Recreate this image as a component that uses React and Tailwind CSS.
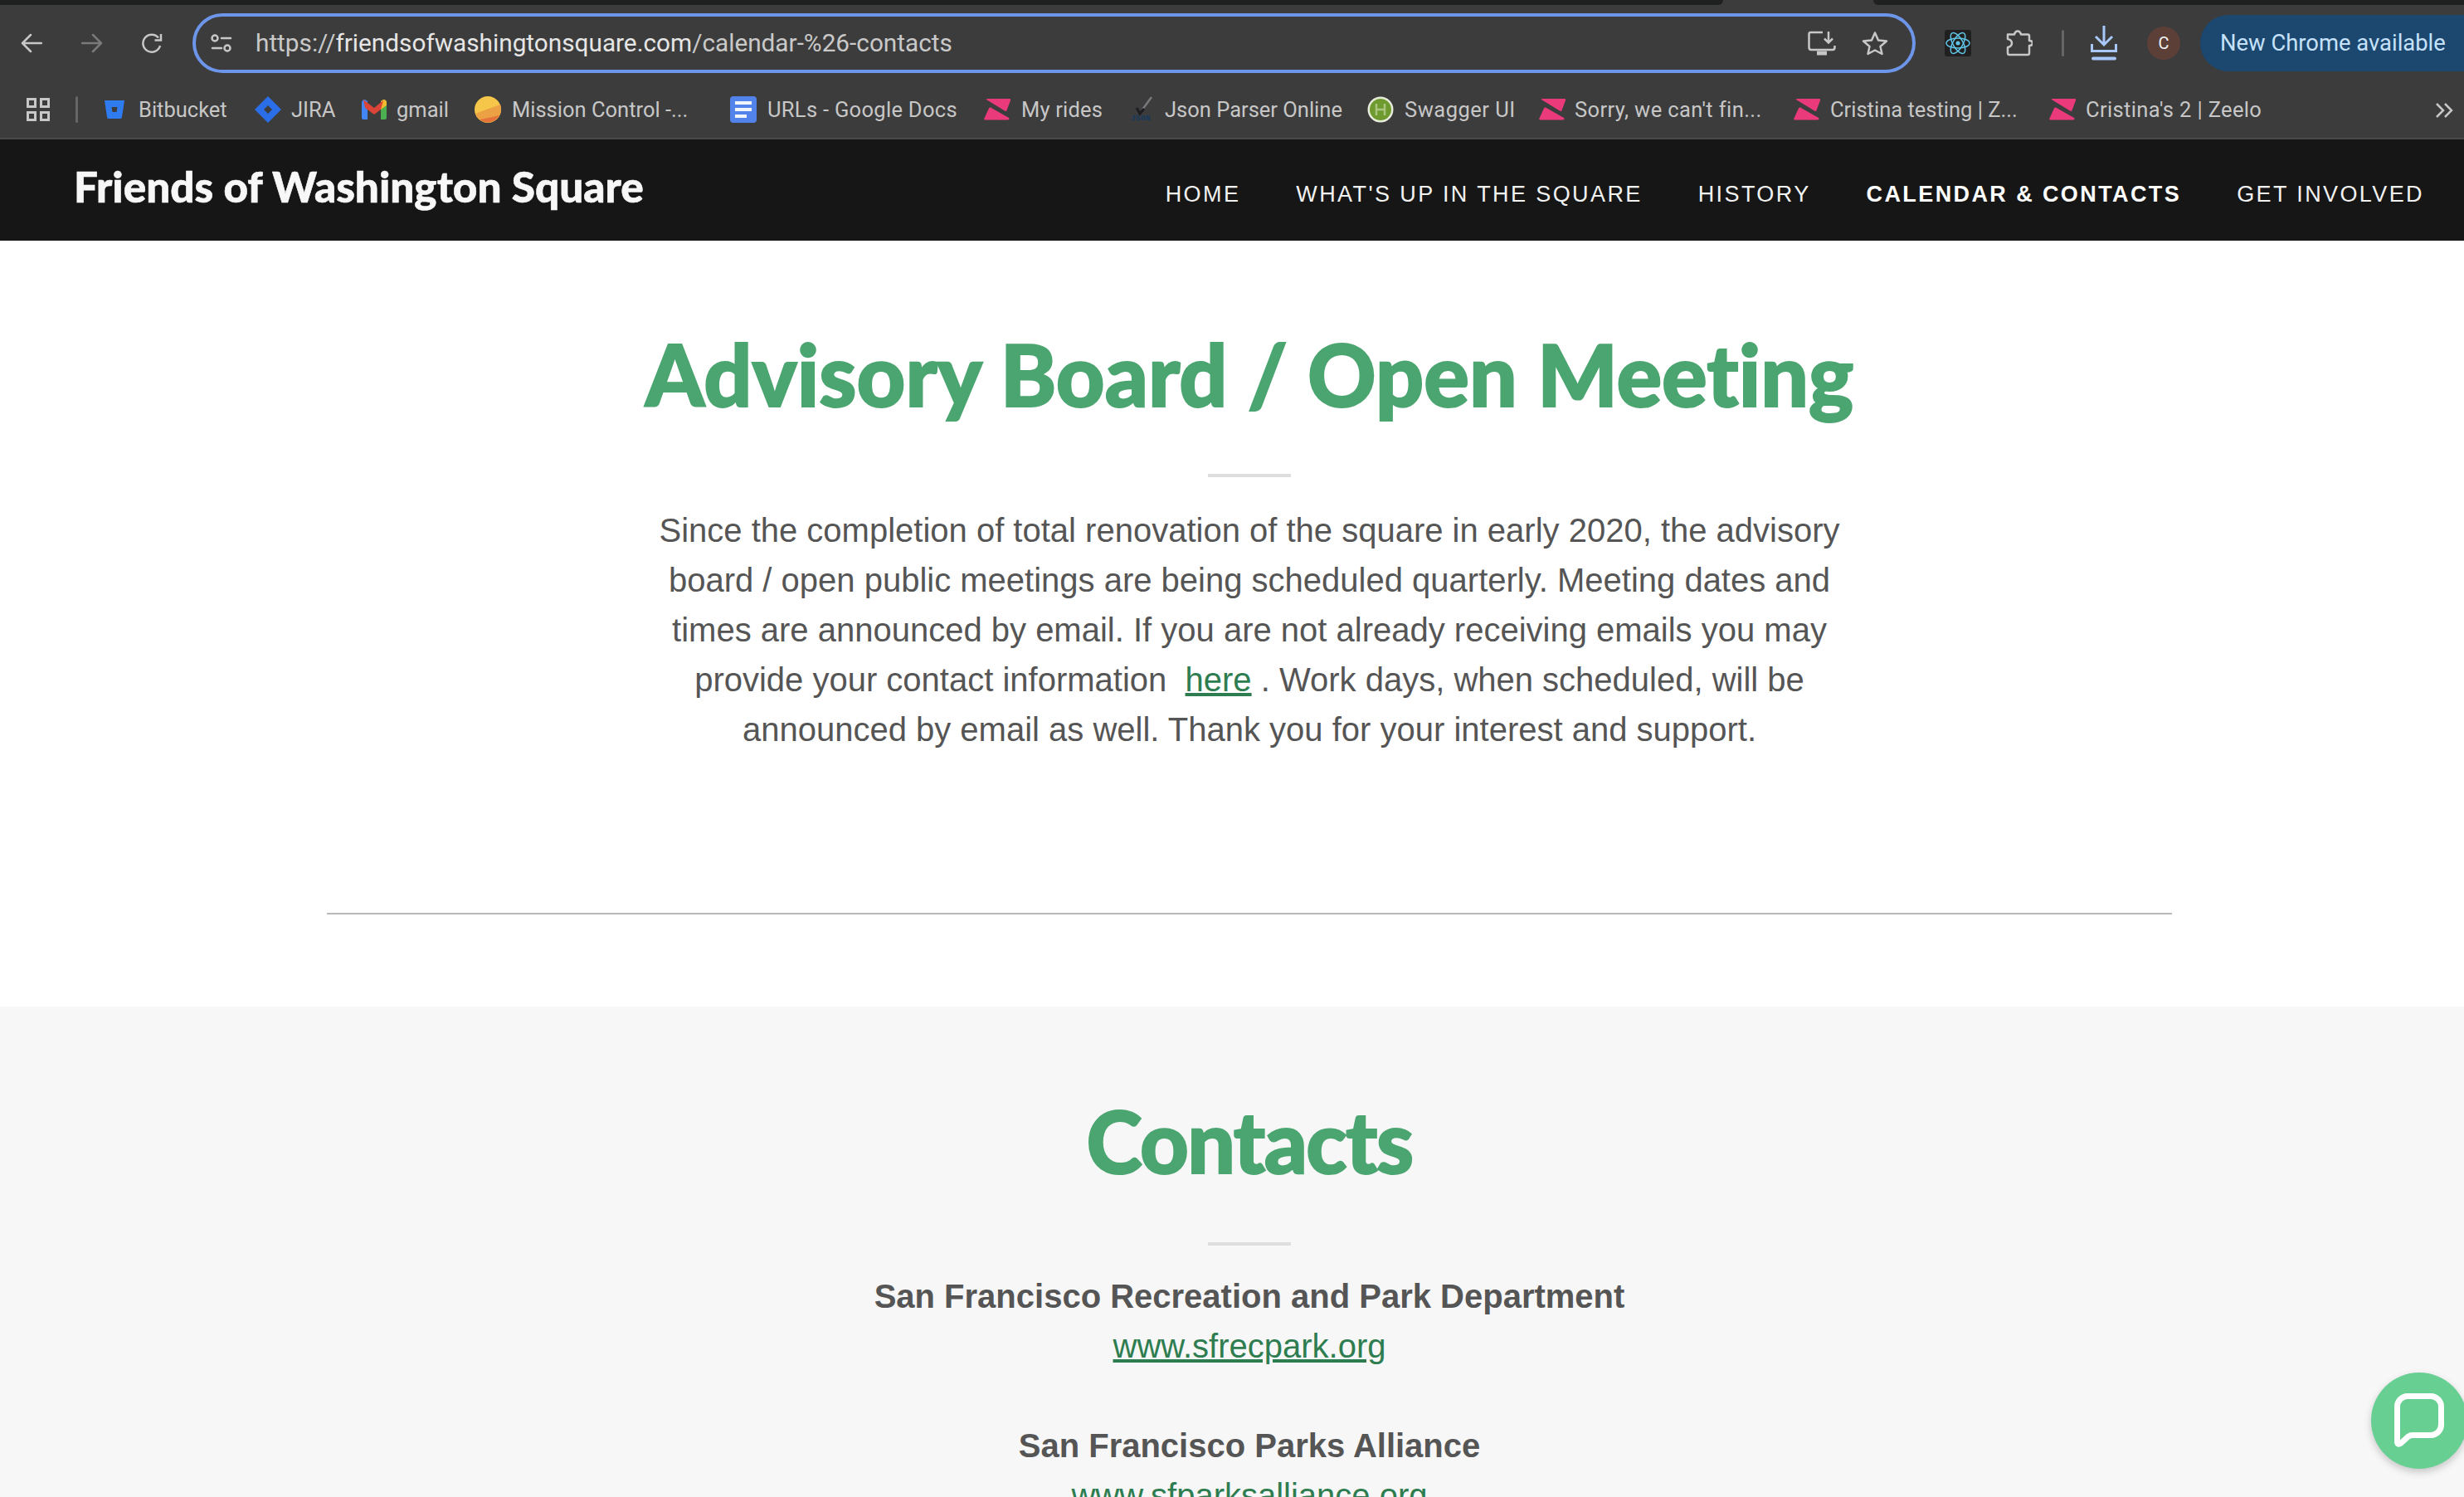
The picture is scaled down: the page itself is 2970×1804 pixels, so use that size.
import React from "react";

const Zeelo = () => (
  <svg width="32" height="26" viewBox="0 0 32 26">
    <path d="M3 1 Q2 0 4 0 H31 Q33 0 32 2 L27.500 14 Q27 15.500 25 14.500 Z" fill="#ea3a7c" />
    <path d="M8 10.500 L30 23 Q31.500 25 29 25.500 H1.500 Q-0.500 25.500 0.500 23.500 L6 11.500 Q7 10 8 10.500 Z" fill="#ea3a7c" />
  </svg>
);

const BitbucketIcon = () => (
  <svg width="24" height="22" viewBox="0 0 24 22">
    <path fillRule="evenodd" d="M0 0 H24 L21 20 Q21 22 19 22 H5 Q3 22 3 20 Z M8.500 8 L9.500 14 H14.500 L15.500 8 Z" fill="#2f7bf0" />
  </svg>
);

const JiraIcon = () => (
  <svg width="32" height="32" viewBox="0 0 32 32">
    <path fillRule="evenodd" d="M16 0 L32 16 L16 32 L0 16 Z M16 11 L11 16 L16 21 L21 16 Z" fill="#2a6fe8" />
  </svg>
);

const GmailIcon = () => (
  <svg width="30" height="24" viewBox="0 0 30 24">
    <path d="M0 4 Q0 0 4 0 L7 2 V24 H2 Q0 24 0 22 Z" fill="#4285f4" />
    <path d="M23 2 L26 0 Q30 0 30 4 V22 Q30 24 28 24 H23 Z" fill="#4caf50" />
    <path d="M23 2 L26 0 Q30 0 30 4 V7 L23 12 Z" fill="#f4b92e" />
    <path d="M2 0 L15 10 L26 1 L23 12 L15 18 L4 10 Z" fill="#db4437" />
  </svg>
);

const MissionIcon = () => (
  <svg width="32" height="32" viewBox="0 0 32 32">
    <circle cx="16" cy="16" r="16" fill="#f6c64a" />
    <path d="M1 21 Q14 16 31 10 Q32 13 32 16 A16 16 0 0 1 1 21 Z" fill="#eba144" />
    <path d="M6 28 Q18 26 30 23 A16 16 0 0 1 6 28 Z" fill="#e5743a" />
  </svg>
);

const DocsIcon = () => (
  <svg width="32" height="32" viewBox="0 0 32 32">
    <rect width="32" height="32" rx="4" fill="#5283ea" />
    <rect x="6" y="6" width="20" height="4" fill="#f1f4fb" />
    <rect x="6" y="14" width="20" height="4" fill="#f1f4fb" />
    <rect x="6" y="22" width="14" height="4" fill="#f1f4fb" />
  </svg>
);

const JsonIcon = () => (
  <svg width="32" height="32" viewBox="0 0 32 32">
    <path d="M29 1 L18 16" stroke="#77797c" strokeWidth="2.500" fill="none" />
    <path d="M11 14 L15 21 L20 15" stroke="#1d1d22" strokeWidth="3" fill="none" />
    <text x="16" y="29" textAnchor="middle" fontSize="9" fontWeight="700" letterSpacing="0.500" fill="#123a63" fontFamily="'Liberation Mono', monospace">JSON</text>
  </svg>
);

const SwaggerIcon = () => (
  <svg width="32" height="32" viewBox="0 0 32 32">
    <circle cx="16" cy="16" r="15.500" fill="#e6ecd9" />
    <circle cx="16" cy="16" r="13" fill="#6f9a30" />
    <path d="M11 9 V23 M21 9 V23 M10 16 H22" stroke="#a9c77c" strokeWidth="2.500" fill="none" />
  </svg>
);

const bookmarks = [
  { label: "Bitbucket", icon: <BitbucketIcon />, box: "w-[24px] ml-[32px]", text: "w-[106px] ml-[17px]" },
  { label: "JIRA", icon: <JiraIcon />, box: "w-[32px] ml-[34px]", text: "w-[49px] ml-[12px]" },
  { label: "gmail", icon: <GmailIcon />, box: "w-[30px] ml-[36px]", text: "w-[60px] ml-[12px]" },
  { label: "Mission Control -...", icon: <MissionIcon />, box: "w-[32px] ml-[34px]", text: "w-[211px] ml-[13px]" },
  { label: "URLs - Google Docs", icon: <DocsIcon />, box: "w-[32px] ml-[52px]", text: "w-[228px] ml-[13px] tracking-[0.300px]" },
  { label: "My rides", icon: <Zeelo />, box: "w-[32px] ml-[33px]", text: "w-[96px] ml-[13px] tracking-[0.200px]" },
  { label: "Json Parser Online", icon: <JsonIcon />, box: "w-[32px] ml-[32px]", text: "w-[211px] ml-[13px]" },
  { label: "Swagger UI", icon: <SwaggerIcon />, box: "w-[32px] ml-[33px]", text: "w-[128px] ml-[13px] tracking-[0.500px]" },
  { label: "Sorry, we can't fin...", icon: <Zeelo />, box: "w-[32px] ml-[34px]", text: "w-[224px] ml-[11px] tracking-[0.400px]" },
  { label: "Cristina testing | Z...", icon: <Zeelo />, box: "w-[32px] ml-[40px]", text: "w-[225px] ml-[12px]" },
  { label: "Cristina's 2 | Zeelo", icon: <Zeelo />, box: "w-[32px] ml-[39px]", text: "w-[210px] ml-[12px] tracking-[0.350px]" },
];

const navLinks = [
  { label: "HOME" },
  { label: "WHAT'S UP IN THE SQUARE" },
  { label: "HISTORY" },
  { label: "CALENDAR & CONTACTS", active: true },
  { label: "GET INVOLVED" },
];

const Browser = () => (
  <div className="h-[168px] bg-[#3c3c3c] [font-family:Roboto,sans-serif] border-b-2 border-[#4a4a4a]">
    {/* tab strip */}
    <div className="flex h-[6px] bg-[#3c3c3c]">
      <div className="w-[2077px] bg-[#1f2120] rounded-br-[6px]" />
      <div className="w-[181px]" />
      <div className="flex-1 bg-[#1f2120] rounded-bl-[6px]" />
    </div>

    {/* toolbar */}
    <div className="flex items-center h-[92px] pl-[25px]">
      <svg width="26" height="24" viewBox="0 0 26 24" fill="none" stroke="#c7c7c7" strokeWidth="2.500" strokeLinecap="round" strokeLinejoin="round">
        <path d="M25 12 H2 M12 2 L2 12 L12 22" />
      </svg>
      <svg className="ml-[47px]" width="26" height="24" viewBox="0 0 26 24" fill="none" stroke="#7a7a7a" strokeWidth="2.500" strokeLinecap="round" strokeLinejoin="round">
        <path d="M1 12 H24 M14 2 L24 12 L14 22" />
      </svg>
      <svg className="ml-[46px]" width="26" height="26" viewBox="0 0 26 26" fill="none" stroke="#c7c7c7" strokeWidth="2.500">
        <path d="M23 16 A10.500 10.500 0 1 1 21 6.500" />
        <path d="M24 2 V9.500 H16.500" strokeLinejoin="miter" />
      </svg>

      {/* address bar */}
      <div className="ml-[36px] flex items-center w-[2077px] h-[72px] rounded-full border-4 border-[#6d96ea] pl-[18px] pr-[29px]">
        <svg width="26" height="22" viewBox="0 0 26 22" fill="none" stroke="#c7c7c7" strokeWidth="2.500" strokeLinecap="round">
          <circle cx="5" cy="5" r="3.500" />
          <path d="M13 5 H24 M2 17 H13" />
          <circle cx="20" cy="17" r="3.500" />
        </svg>
        <span className="ml-[28px] text-[29.750px] leading-none text-[#c9c9c9]">
          https://<span className="text-[#e6e6e6]">friendsofwashingtonsquare.com</span>/calendar-%26-contacts
        </span>
        <svg className="ml-auto" width="34" height="30" viewBox="0 0 34 30" fill="none" stroke="#c7c7c7" strokeWidth="2.500">
          <path d="M18 2 H3.500 Q1.500 2 1.500 4 V20 Q1.500 23 4 23 H30 Q32.500 23 32.500 20 V18" />
          <path d="M25 1 V14 M20 9.500 L25 14.500 L30 9.500" />
          <path d="M11 27 H23" strokeWidth="5" />
        </svg>
        <svg className="ml-[31px]" width="32" height="30" viewBox="0 0 32 30" fill="none" stroke="#c7c7c7" strokeWidth="2.500" strokeLinejoin="round">
          <path d="M16 2.500 L20 11.500 L30 12.500 L22.500 19 L24.500 28 L16 23.500 L7.500 28 L9.500 19 L2 12.500 L12 11.500 Z" />
        </svg>
      </div>

      {/* extensions */}
      <div className="ml-[35px] flex items-center justify-center w-[32px] h-[32px] rounded-[3px] bg-[#202020]">
        <svg width="30" height="30" viewBox="0 0 30 30" fill="none" stroke="#61c3e6" strokeWidth="1.500">
          <ellipse cx="15" cy="15" rx="14" ry="6" />
          <ellipse cx="15" cy="15" rx="14" ry="6" transform="rotate(60 15 15)" />
          <ellipse cx="15" cy="15" rx="14" ry="6" transform="rotate(120 15 15)" />
          <circle cx="15" cy="15" r="2.500" fill="#61c3e6" stroke="none" />
        </svg>
      </div>
      <svg className="ml-[42px]" width="32" height="32" viewBox="0 0 32 32" fill="none" stroke="#c7c7c7" strokeWidth="2.500" strokeLinejoin="round">
        <path d="M2 5.500 H10 Q11 1.500 14 1.500 Q17 1.500 18 5.500 H26 Q28 5.500 28 7.500 V13 Q32 13 32 16 Q32 19 28 19 V28 Q28 30 26 30 H4 Q2 30 2 28 V21 Q7 20 7 16 Q7 12 2 11 Z" />
      </svg>
      <div className="ml-[35px] w-[3px] h-[32px] rounded-full bg-[#666666]" />
      <svg className="ml-[32px]" width="32" height="42" viewBox="0 0 32 42" fill="none" stroke="#a8c7fa" strokeWidth="3">
        <path d="M16 0 V22 M6 13 L16 23 L26 13" />
        <path d="M1.500 22 V30.500 H30.500 V22" />
        <path d="M3 39.500 H29" strokeWidth="4" strokeLinecap="round" />
      </svg>
      <div className="ml-[36px] flex items-center justify-center w-[40px] h-[40px] rounded-full bg-[#5c4038] text-[#f1f1f1] text-[20px]">
        C
      </div>
      <div className="ml-[24px] flex-1 flex items-center h-[68px] rounded-l-full bg-[#1c4870] pl-[24px] pt-[2px] text-[27.400px] text-[#c6e2fb] whitespace-nowrap">
        New Chrome available
      </div>
    </div>

    {/* bookmarks bar */}
    <div className="relative flex items-center h-[68px] pl-[32px] text-[25.500px] text-[#c7c7c7]">
      <svg width="28" height="28" viewBox="0 0 28 28" fill="none" stroke="#c7c7c7" strokeWidth="3">
        <rect x="1.500" y="1.500" width="9" height="9" />
        <rect x="17.500" y="1.500" width="9" height="9" />
        <rect x="1.500" y="17.500" width="9" height="9" />
        <rect x="17.500" y="17.500" width="9" height="9" />
      </svg>
      <div className="ml-[31px] w-[3px] h-[32px] rounded-full bg-[#666666]" />
      {bookmarks.map((b, i) => (
        <div key={i} className="flex items-center">
          <div className={`flex justify-center ${b.box}`}>{b.icon}</div>
          <span className={`whitespace-nowrap ${b.text}`}>{b.label}</span>
        </div>
      ))}
      <svg className="absolute left-[2935px] top-[26px]" width="22" height="18" viewBox="0 0 22 18" fill="none" stroke="#c7c7c7" strokeWidth="2.500">
        <path d="M2 1 L10 9 L2 17 M12 1 L20 9 L12 17" />
      </svg>
    </div>
  </div>
);

const Heading = ({ children, className }) => (
  <h2 className={`[font-family:Lato,sans-serif] font-black text-[#4ba570] text-[102px] leading-[120px] text-center [font-variant-ligatures:none] [-webkit-text-stroke:2px_#4ba570] ${className}`}>
    {children}
  </h2>
);

const Rule = () => <div className="mx-auto w-[100px] h-[4px] bg-[#dedede]" />;

const App = () => {
  return (
    <div className="relative w-[2970px] h-[1804px] overflow-hidden bg-white">
      <Browser />

      <div className="w-[3012px]">
        {/* site header */}
        <header className="flex items-center justify-between h-[122px] bg-[#161616] pl-[89px] pr-[90px]">
          <div className="pb-[9px] [font-family:Lato,sans-serif] font-black text-[51.300px] text-[#f7f7f7] whitespace-nowrap [-webkit-text-stroke:0.6px_#f7f7f7]">
            Friends of Washington Square
          </div>
          <nav className="flex gap-[67px] pt-[11px] [font-family:'Liberation_Sans',sans-serif] text-[27px] tracking-[2.400px] text-[#f2f2f2]">
            {navLinks.map((l) => (
              <a key={l.label} className={l.active ? "font-bold text-white" : ""}>
                {l.label}
              </a>
            ))}
          </nav>
        </header>

        {/* advisory board */}
        <section className="h-[923px] bg-white pt-[101px] [font-family:'Liberation_Sans',sans-serif]">
          <Heading>Advisory Board / Open Meeting</Heading>
          <div className="mt-[60px]">
            <Rule />
          </div>
          <p className="mt-[34px] text-center text-[40px] leading-[60px] text-[#555555]">
            Since the completion of total renovation of the square in early 2020, the advisory
            <br />
            board / open public meetings are being scheduled quarterly. Meeting dates and
            <br />
            times are announced by email. If you are not already receiving emails you may
            <br />
            provide your contact information&nbsp; <a className="underline text-[#2e7d50]">here</a> . Work days, when scheduled, will be
            <br />
            announced by email as well. Thank you for your interest and support.
          </p>
          <div className="mt-[191px] mx-auto w-[2224px] h-[2px] bg-[#b8b8b8]" />
        </section>

        {/* contacts */}
        <section className="bg-[#f7f7f7] pt-[102px] [font-family:'Liberation_Sans',sans-serif] text-center text-[40px] leading-[60px] text-[#555555]">
          <Heading className="tracking-[-1.600px]">Contacts</Heading>
          <div className="mt-[62px] mb-[31px]">
            <Rule />
          </div>
          <p className="font-bold">San Francisco Recreation and Park Department</p>
          <p><a className="underline text-[#2e7d50]">www.sfrecpark.org</a></p>
          <p className="mt-[60px] font-bold">San Francisco Parks Alliance</p>
          <p><a className="underline text-[#2e7d50]">www.sfparksalliance.org</a></p>
        </section>
      </div>

      {/* chat bubble */}
      <div className="absolute left-[2858px] top-[1654px] flex items-center justify-center w-[116px] h-[116px] rounded-full bg-[#68cf93] shadow-[0_4px_10px_rgba(0,0,0,0.2)]">
        <svg width="60" height="66" viewBox="0 0 60 66" fill="none" stroke="#ffffff" strokeWidth="7">
          <path d="M16 3.500 H44 A12.500 12.500 0 0 1 56.500 16 V38 A12.500 12.500 0 0 1 44 50.500 H22 Q19 50.500 17 52 L8 60 Q3.500 63 3.500 58 V16 A12.500 12.500 0 0 1 16 3.500 Z" />
        </svg>
      </div>
    </div>
  );
};

export default App;
